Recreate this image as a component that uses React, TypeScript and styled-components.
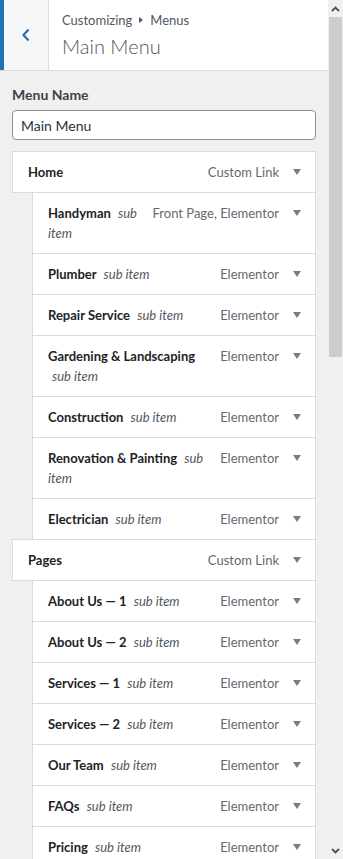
import styled, { createGlobalStyle } from 'styled-components';

type MenuItem = {
  title: string;
  type: string;
  sub?: boolean;
};

const items: MenuItem[] = [
  { title: 'Home', type: 'Custom Link' },
  { title: 'Handyman', type: 'Front Page, Elementor', sub: true },
  { title: 'Plumber', type: 'Elementor', sub: true },
  { title: 'Repair Service', type: 'Elementor', sub: true },
  { title: 'Gardening & Landscaping', type: 'Elementor', sub: true },
  { title: 'Construction', type: 'Elementor', sub: true },
  { title: 'Renovation & Painting', type: 'Elementor', sub: true },
  { title: 'Electrician', type: 'Elementor', sub: true },
  { title: 'Pages', type: 'Custom Link' },
  { title: 'About Us — 1', type: 'Elementor', sub: true },
  { title: 'About Us — 2', type: 'Elementor', sub: true },
  { title: 'Services — 1', type: 'Elementor', sub: true },
  { title: 'Services — 2', type: 'Elementor', sub: true },
  { title: 'Our Team', type: 'Elementor', sub: true },
  { title: 'FAQs', type: 'Elementor', sub: true },
  { title: 'Pricing', type: 'Elementor', sub: true },
];

const GlobalStyle = createGlobalStyle`
  html, body {
    margin: 0;
    height: 100%;
    overflow: hidden;
  }
  body {
    font-family: Lato, "Open Sans", sans-serif;
    font-size: 13px;
    color: #1d2327;
    background: #f0f0f1;
  }
`;

const Frame = styled.div`
  display: flex;
  height: 859px;
  overflow: hidden;
`;

const Panel = styled.div`
  flex: 1;
  min-width: 0;
  display: flex;
  flex-direction: column;
`;

const Header = styled.header`
  display: flex;
  height: 70px;
  flex-shrink: 0;
  background: #fff;
  border-bottom: 1px solid #dcdcde;
`;

const BackButton = styled.button`
  width: 49px;
  flex-shrink: 0;
  display: flex;
  align-items: center;
  justify-content: center;
  padding: 0;
  margin: 0;
  border: 0;
  border-left: 4px solid #2271b1;
  border-right: 1px solid #dcdcde;
  background: #f6f7f7;
  color: #2271b1;
`;

const HeaderTitle = styled.div`
  padding: 9px 13px 0;
  color: #50575e;
`;

const Crumbs = styled.div`
  font-size: 13px;
  line-height: 22px;
  display: flex;
  align-items: center;
  gap: 7px;
`;

const CrumbArrow = styled.span`
  width: 0;
  height: 0;
  border-top: 3px solid transparent;
  border-bottom: 3px solid transparent;
  border-left: 4px solid #50575e;
`;

const PageTitle = styled.h1`
  margin: 2px 0 0;
  font-size: 20px;
  font-weight: 300;
  line-height: 26px;
  color: #50575e;
`;

const Body = styled.div`
  padding: 14px 12px 0;
`;

const Label = styled.label`
  display: block;
  font-size: 14px;
  font-weight: 700;
  color: #3c434a;
  line-height: 20px;
  margin-bottom: 5px;
`;

const NameInput = styled.input`
  box-sizing: border-box;
  width: 100%;
  height: 30px;
  padding: 0 8px;
  border: 1px solid #8c8f94;
  border-radius: 4px;
  font-family: inherit;
  font-size: 14px;
  color: #2c3338;
  background: #fff;
`;

const List = styled.ul`
  list-style: none;
  margin: 11px 0 0;
  padding: 0;
`;

const Row = styled.li<{ $sub?: boolean }>`
  display: flex;
  align-items: flex-start;
  margin: -1px 0 0 ${({ $sub }) => ($sub ? '20px' : '0')};
  padding: 10px 0 10px 15px;
  background: #fff;
  border: 1px solid #dcdcde;
  line-height: 20px;
  &:first-child {
    margin-top: 0;
  }
`;

const Title = styled.div`
  flex: 1;
  min-width: 0;
  font-weight: 700;
  color: #1d2327;
`;

const SubTag = styled.span`
  margin-left: 4px;
  font-weight: 400;
  font-style: italic;
  color: #50575e;
`;

const ItemType = styled.span`
  flex-shrink: 0;
  padding-left: 10px;
  color: #646970;
`;

const Toggle = styled.span`
  width: 36px;
  flex-shrink: 0;
  display: flex;
  justify-content: center;
  padding-top: 7px;
  &::after {
    content: '';
    border-left: 4.5px solid transparent;
    border-right: 4.5px solid transparent;
    border-top: 6px solid #787c82;
  }
`;

const ScrollTrack = styled.div`
  width: 15px;
  flex-shrink: 0;
  display: flex;
  flex-direction: column;
  background: #f0f0f0;
`;

const ScrollArrow = styled.div`
  height: 17px;
  flex-shrink: 0;
  display: flex;
  align-items: center;
  justify-content: center;
  color: #505050;
`;

const ScrollThumb = styled.div`
  height: 340px;
  margin: 0 1px 0 1px;
  background: #cdcdcd;
`;

const ScrollRest = styled.div`
  flex: 1;
`;

export default function App() {
  return (
    <>
      <GlobalStyle />
      <Frame>
        <Panel>
          <Header>
            <BackButton aria-label="Back">
              <svg width="10" height="14" viewBox="0 0 10 14">
                <path d="M7.5 1.5 L2.5 7 L7.5 12.5" fill="none" stroke="currentColor" strokeWidth="2.2" />
              </svg>
            </BackButton>
            <HeaderTitle>
              <Crumbs>
                Customizing <CrumbArrow /> Menus
              </Crumbs>
              <PageTitle>Main Menu</PageTitle>
            </HeaderTitle>
          </Header>
          <Body>
            <Label>Menu Name</Label>
            <NameInput defaultValue="Main Menu" />
            <List>
              {items.map((item) => (
                <Row key={item.title} $sub={item.sub}>
                  <Title>
                    {item.title} {item.sub && <SubTag>sub item</SubTag>}
                  </Title>
                  <ItemType>{item.type}</ItemType>
                  <Toggle />
                </Row>
              ))}
            </List>
          </Body>
        </Panel>
        <ScrollTrack>
          <ScrollArrow>
            <svg width="9" height="6" viewBox="0 0 9 6">
              <path d="M1 5 L4.5 1.5 L8 5" fill="none" stroke="currentColor" strokeWidth="1.8" />
            </svg>
          </ScrollArrow>
          <ScrollThumb />
          <ScrollRest />
          <ScrollArrow>
            <svg width="9" height="6" viewBox="0 0 9 6">
              <path d="M1 1 L4.5 4.5 L8 1" fill="none" stroke="currentColor" strokeWidth="1.8" />
            </svg>
          </ScrollArrow>
        </ScrollTrack>
      </Frame>
    </>
  );
}
